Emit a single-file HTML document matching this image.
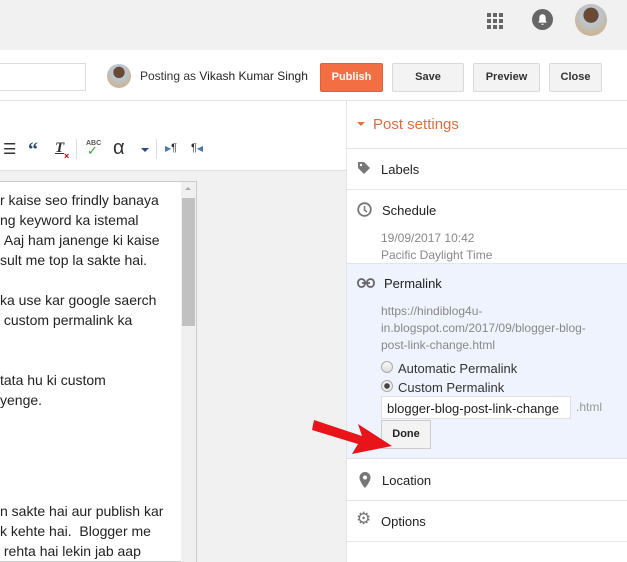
<!DOCTYPE html>
<html><head><style>
*{margin:0;padding:0;box-sizing:border-box}
body{width:627px;height:562px;overflow:hidden;background:#fff;font-family:"Liberation Sans",Arial,sans-serif;position:relative}
.a{position:absolute}
.btn{position:absolute;top:63px;height:29px;border:1px solid #d9d9d9;background:#f3f3f3;border-radius:2px;font-size:11px;font-weight:bold;color:#333;text-align:center;line-height:27px}
.et{font-size:14px;color:#222;white-space:nowrap;left:0}
.sb{font-size:13px;color:#222}
.gr{font-size:12px;color:#888;line-height:17px}
.sep{position:absolute;left:347px;right:0;height:1px;background:#e5e5e5}
</style></head><body>
<div class="a" style="left:0;top:0;width:627px;height:50px;background:#f1f1f1"></div>
<svg class="a" style="left:486px;top:12px" width="18" height="18" viewBox="0 0 18 18" fill="#666"><rect x="1" y="1" width="4" height="4"/><rect x="7" y="1" width="4" height="4"/><rect x="13" y="1" width="4" height="4"/><rect x="1" y="7" width="4" height="4"/><rect x="7" y="7" width="4" height="4"/><rect x="13" y="7" width="4" height="4"/><rect x="1" y="13" width="4" height="4"/><rect x="7" y="13" width="4" height="4"/><rect x="13" y="13" width="4" height="4"/></svg>
<svg class="a" style="left:532px;top:9px" width="21" height="21" viewBox="0 0 20 20"><circle cx="10" cy="10" r="10" fill="#666"/><path d="M6 13h8l-1-2V8a3 3 0 0 0-6 0v3z M9 14h2v1h-2z" fill="#fff"/></svg>
<div class="a" style="left:575px;top:4px;width:32px;height:32px;border-radius:50%;background:radial-gradient(circle at 50% 35%,#6b4a35 0 28%,#b8c8d8 30%,#c9b79a 70%)"></div>
<div class="a" style="left:-3px;top:63px;width:89px;height:28px;border:1px solid #ddd;background:#fff"></div>
<div class="a" style="left:107px;top:64px;width:24px;height:24px;border-radius:50%;background:radial-gradient(circle at 50% 35%,#6b4a35 0 28%,#b8c8d8 30%,#c9b79a 70%)"></div>
<div class="a" style="left:140px;top:69px;font-size:12px;color:#333">Posting as <span style="color:#222">Vikash Kumar Singh</span></div>
<div class="btn" style="left:320px;width:63px;background:#f36e43;border-color:#e0603a;color:#fff">Publish</div>
<div class="btn" style="left:392px;width:72px">Save</div>
<div class="btn" style="left:473px;width:67px">Preview</div>
<div class="btn" style="left:549px;width:53px">Close</div>
<div class="a" style="left:0;top:100px;width:627px;height:1px;background:#e5e5e5"></div>
<div class="a" style="left:0;top:170px;width:346px;height:392px;background:#f1f1f1;border-top:1px solid #e0e0e0"></div>
<div class="a" style="left:0;top:181px;width:197px;height:381px;background:#fff;border:1px solid #ccc;border-left:none"></div>
<div class="a" style="left:181px;top:182px;width:15px;height:380px;background:#f0f0f0"></div>
<div class="a" style="left:182px;top:198px;width:13px;height:128px;background:#c1c1c1"></div>
<div class="a" style="left:185px;top:187px;width:0;height:0;border:3px solid transparent;border-bottom-color:#aaa;border-top:0"></div>
<div class="a" style="left:0;top:182px;width:180px;height:380px;overflow:hidden">
<div class="a et" style="top:10px;left:0">r kaise seo frindly banaya</div>
<div class="a et" style="top:30px;left:0">ng keyword ka istemal</div>
<div class="a et" style="top:50px;left:0">&nbsp;Aaj ham janenge ki kaise</div>
<div class="a et" style="top:70px;left:0">sult me top la sakte hai.</div>
<div class="a et" style="top:110px;left:0">ka use kar google saerch</div>
<div class="a et" style="top:130px;left:0">&nbsp;custom permalink ka</div>
<div class="a et" style="top:190px;left:0">tata hu ki custom</div>
<div class="a et" style="top:210px;left:0">yenge.</div>
<div class="a et" style="top:321px;left:0">n sakte hai aur publish kar</div>
<div class="a et" style="top:341px;left:0">k kehte hai.&nbsp; Blogger me</div>
<div class="a et" style="top:361px;left:0">&nbsp;rehta hai lekin jab aap</div>
</div>
<div class="a" style="left:3px;top:140px;font-size:15px;color:#333">☰</div>
<div class="a" style="left:28px;top:139px;font-size:20px;font-weight:bold;color:#2a4a7a;font-family:'Liberation Serif',serif">“</div>
<div class="a" style="left:55px;top:140px;font-size:15px;font-style:italic;font-weight:bold;text-decoration:underline;color:#333;font-family:'Liberation Serif',serif">T</div>
<div class="a" style="left:64px;top:151px;font-size:9px;color:#c00;font-weight:bold">×</div>
<div class="a" style="left:76px;top:139px;width:1px;height:20px;background:#ddd"></div>
<div class="a" style="left:86px;top:140px;font-size:7px;color:#555;font-weight:bold">ABC</div>
<div class="a" style="left:87px;top:143px;font-size:13px;color:#3a3">✓</div>
<div class="a" style="left:113px;top:137px;font-size:20px;color:#333">α</div>
<div class="a" style="left:141px;top:148px;width:0;height:0;border:4px solid transparent;border-top-color:#2a4a7a;border-bottom:0"></div>
<div class="a" style="left:156px;top:139px;width:1px;height:20px;background:#ddd"></div>
<div class="a" style="left:165px;top:142px;font-size:11px;color:#333"><span style="color:#4a7ab0;font-size:8px">▶</span>¶</div>
<div class="a" style="left:191px;top:142px;font-size:11px;color:#333">¶<span style="color:#4a7ab0;font-size:8px">◀</span></div>
<div class="a" style="left:346px;top:101px;width:1px;height:461px;background:#e5e5e5"></div>
<div class="a" style="left:357px;top:122px;width:0;height:0;border:4px solid transparent;border-top-color:#e8703f;border-bottom:0"></div>
<div class="a" style="left:373px;top:116px;font-size:15px;color:#dd6d3e">Post settings</div>
<div class="sep" style="top:148px"></div>
<svg class="a" style="left:357px;top:161px" width="14" height="14" viewBox="0 0 14 14"><path d="M1 1h6l6 6-6 6-6-6z" fill="#777"/><circle cx="4" cy="4" r="1.2" fill="#fff"/></svg>
<div class="a sb" style="left:381px;top:162px">Labels</div>
<div class="sep" style="top:189px"></div>
<svg class="a" style="left:357px;top:202px" width="15" height="15" viewBox="0 0 15 15"><circle cx="7.5" cy="7.5" r="6.3" fill="none" stroke="#777" stroke-width="1.8"/><path d="M7.5 4v4l2.5 2" fill="none" stroke="#777" stroke-width="1.5"/></svg>
<div class="a sb" style="left:382px;top:203px">Schedule</div>
<div class="a gr" style="left:381px;top:230px">19/09/2017 10:42<br>Pacific Daylight Time</div>
<div class="a" style="left:347px;top:263px;width:280px;height:196px;background:#eef3fd;border-top:1px solid #e0e6f0;border-bottom:1px solid #e0e0e0"></div>
<svg class="a" style="left:357px;top:278px" width="18" height="10" viewBox="0 0 18 10"><rect x="1" y="1" width="7" height="8" rx="3.5" fill="none" stroke="#666" stroke-width="1.8"/><rect x="10" y="1" width="7" height="8" rx="3.5" fill="none" stroke="#666" stroke-width="1.8"/><path d="M5 5h8" stroke="#666" stroke-width="1.8"/></svg>
<div class="a sb" style="left:384px;top:276px">Permalink</div>
<div class="a gr" style="left:381px;top:303px">https://hindiblog4u-<br>in.blogspot.com/2017/09/blogger-blog-<br>post-link-change.html</div>
<div class="a" style="left:381px;top:361px;width:12px;height:12px;border-radius:50%;border:1px solid #aaa;background:linear-gradient(#fafafa,#ddd)"></div>
<div class="a sb" style="left:398px;top:361px;color:#333">Automatic Permalink</div>
<div class="a" style="left:381px;top:380px;width:12px;height:12px;border-radius:50%;border:1px solid #aaa;background:radial-gradient(circle,#444 0 2.5px,#eee 3px)"></div>
<div class="a sb" style="left:398px;top:380px;color:#333">Custom Permalink</div>
<div class="a" style="left:381px;top:396px;width:190px;height:23px;background:#fff;border:1px solid #e0e0e0;font-size:13px;color:#222;padding:4px 0 0 5px">blogger-blog-post-link-change</div>
<div class="a" style="left:576px;top:400px;font-size:12px;color:#999">.html</div>
<div class="a" style="left:381px;top:420px;width:50px;height:29px;background:#f3f3f3;border:1px solid #ccc;font-size:11px;font-weight:bold;color:#222;text-align:center;line-height:27px">Done</div>
<svg class="a" style="left:312px;top:408px" width="82" height="50" viewBox="0 0 82 50"><path d="M2 12 L50 28 L46 16 L80 38 L40 46 L46 36 L0 22z" fill="#e8141a"/></svg>
<svg class="a" style="left:359px;top:472px" width="12" height="16" viewBox="0 0 12 16"><path d="M6 0a5.5 5.5 0 0 0-5.5 5.5C.5 10 6 16 6 16s5.5-6 5.5-10.5A5.5 5.5 0 0 0 6 0z" fill="#777"/><circle cx="6" cy="5.5" r="2" fill="#fff"/></svg>
<div class="a sb" style="left:382px;top:473px">Location</div>
<div class="sep" style="top:500px"></div>
<div class="a" style="left:356px;top:509px;font-size:17px;color:#777">⚙</div>
<div class="a sb" style="left:381px;top:514px">Options</div>
<div class="sep" style="top:541px"></div>
</body></html>
